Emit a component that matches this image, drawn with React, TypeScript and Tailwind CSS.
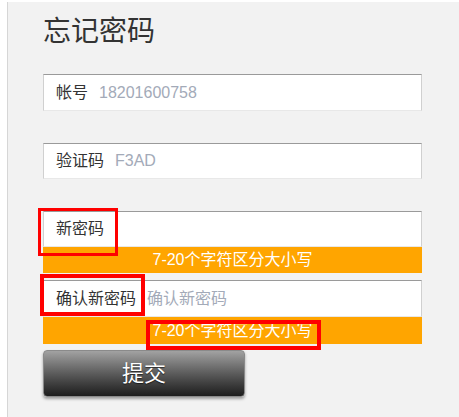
const font = { fontFamily: '"Liberation Sans", "Noto Sans CJK SC", sans-serif' }

function Field({ label, value, className }: { label: string; value?: string; className: string }) {
  return (
    <div
      className={`w-[379px] flex items-center bg-white border border-t-[#9a9a9a] border-x-[#d0d0d0] border-b-[#e8e8e8] pl-[12px] ${className}`}
    >
      <span className="text-[16px] text-[#333]">{label}</span>
      {value && <span className="ml-[11px] text-[16px] text-[#a3aab8]">{value}</span>}
    </div>
  )
}

function Hint() {
  return <span className="text-[16px] text-white">7-20个字符区分大小写</span>
}

export default function App() {
  return (
    <div className="relative w-[459px] h-[417px] bg-white pt-[2px] overflow-hidden" style={font}>
      <div className="ml-[7px] h-[415px] border-l border-[#d6d6d6] bg-[#f2f2f2] pl-[35px] pt-[16px]">
        <h1 className="text-[28px] leading-[28px] text-[#333]">忘记密码</h1>

        <Field label="帐号" value="18201600758" className="mt-[28px] h-[37px]" />
        <Field label="验证码" value="F3AD" className="mt-[32px] h-[36px]" />
        <Field label="新密码" className="mt-[32px] h-[36px]" />
        <div className="w-[379px] h-[26px] bg-[#ffa500] flex items-center justify-center">
          <Hint />
        </div>
        <Field label="确认新密码" value="确认新密码" className="mt-[7px] h-[37px]" />
        <div className="w-[379px] h-[27px] bg-[#ffa500] flex items-center justify-center">
          <Hint />
        </div>

        <button className="mt-[6px] w-[202px] h-[47px] rounded-[4px] border border-[#8a8a8a] bg-gradient-to-b from-[#a2a2a2] to-[#1e1e1e] text-[22px] text-white shadow-[0_2px_3px_rgba(0,0,0,0.35)] [text-shadow:0_1px_1px_rgba(0,0,0,0.6)]">
          提交
        </button>
      </div>

      {/* annotation boxes */}
      <div className="absolute left-[38px] top-[208px] w-[80px] h-[48px] border-[3px] border-[#ff0000]" />
      <div className="absolute left-[40px] top-[274px] w-[105px] h-[42px] border-[4px] border-[#ff0000]" />
      <div className="absolute left-[146px] top-[320px] w-[175px] h-[30px] border-[4px] border-[#ff0000]" />
    </div>
  )
}
